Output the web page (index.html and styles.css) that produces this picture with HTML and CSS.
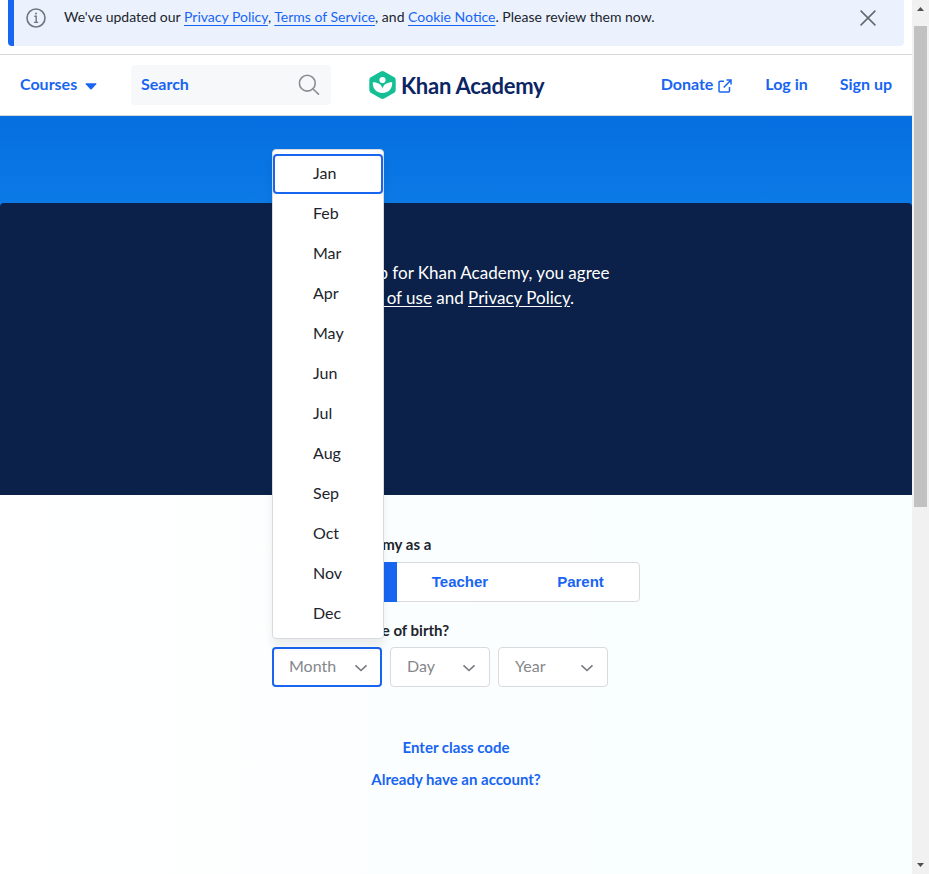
FILE: index.html
```html
<!DOCTYPE html>
<html lang="en">
<head>
<meta charset="utf-8">
<title>Khan Academy</title>
<link rel="stylesheet" href="styles.css">
</head>
<body>
<div class="window">
  <div class="page">
    <div class="notice">
      <svg class="info" width="20" height="20" viewBox="0 0 20 20" fill="none" stroke="#71747b" stroke-width="1.6"><circle cx="10" cy="10" r="9"/><path d="M8.3 8.3h1.9v6M8 14.4h4.2" stroke-width="1.4"/><circle cx="10" cy="5.6" r="1" fill="#71747b" stroke="none"/></svg>
      <p class="notice-text">We've updated our <a>Privacy Policy</a>, <a>Terms of Service</a>, and <a>Cookie Notice</a>. Please review them now.</p>
      <svg class="close" width="16" height="16" viewBox="0 0 16 16" stroke="#64676e" stroke-width="1.5"><path d="M.6.6l14.8 14.8M15.4.6L.6 15.4"/></svg>
    </div>
    <header class="nav">
      <a class="courses">Courses <svg width="12" height="7" viewBox="0 0 12 7"><path d="M1 .3h10q.9.1.2.9L6.700 6.300q-.7.6-1.400 0L.8 1.200Q.1.4 1 .3z" fill="#1865f2"/></svg></a>
      <div class="search"><span>Search</span><svg width="22" height="22" viewBox="0 0 22 22" fill="none" stroke="#8b8d92" stroke-width="1.6"><circle cx="9.3" cy="9.2" r="7.9"/><path d="M15 15l5.500 5.200" stroke-linecap="round"/></svg></div>
      <a class="logo">
        <svg width="27" height="28" viewBox="0 0 27 28"><path d="M11.800.5q1.700-.9 3.400 0l10 5.700q1.500.9 1.500 2.700v10.200q0 1.800-1.500 2.700l-10 5.700q-1.700.9-3.400 0l-10-5.700Q.3 20.900.3 19.100V8.900Q.3 7.100 1.800 6.200z" fill="#14bf96"/><circle cx="13.500" cy="9" r="3.100" fill="#fff"/><path d="M3.800 11.300C9 11.300 12.700 13.600 13.500 17.700C14.300 13.600 18 11.300 23.200 11.300C23.600 17.300 20 22 13.500 22S3.400 17.300 3.800 11.300z" fill="#fff"/></svg>
        <span>Khan Academy</span>
      </a>
      <nav class="links"><a class="donate">Donate <svg width="14" height="14" viewBox="0 0 14 14" fill="none" stroke="#1865f2" stroke-width="1.5"><path d="M6 2.200H2Q1 2.200 1 3.200V12Q1 13 2 13h8.500q1 0 1-1V8M8.500.9H13v4.500M13 .9L5.700 8.500"/></svg></a><a>Log in</a><a>Sign up</a></nav>
    </header>
    <div class="hero"></div>
    <section class="terms">
      <p>By signing up for Khan Academy, you agree to our <a>Terms of use</a> and <a>Privacy Policy</a>.</p>
    </section>
    <main class="signup">
      <div class="form">
        <div class="label">Join Khan Academy as a</div>
        <div class="roles"><button class="selected">Learner</button><button>Teacher</button><button>Parent</button></div>
        <div class="label birth">What is your date of birth?</div>
        <div class="dates">
          <div class="select month"><span>Month</span><svg width="14" height="8" viewBox="0 0 14 8"><path d="M1.500 1.300L7 6.500l5.500-5.200"/></svg>
            <ul class="menu"><li class="active">Jan</li><li>Feb</li><li>Mar</li><li>Apr</li><li>May</li><li>Jun</li><li>Jul</li><li>Aug</li><li>Sep</li><li>Oct</li><li>Nov</li><li>Dec</li></ul>
          </div>
          <div class="select day"><span>Day</span><svg width="14" height="8" viewBox="0 0 14 8"><path d="M1.500 1.300L7 6.500l5.500-5.200"/></svg></div>
          <div class="select year"><span>Year</span><svg width="14" height="8" viewBox="0 0 14 8"><path d="M1.500 1.300L7 6.500l5.500-5.200"/></svg></div>
        </div>
      </div>
      <a class="action">Enter class code</a>
      <a class="action">Already have an account?</a>
    </main>
  </div>
  <div class="scrollbar">
    <svg width="7" height="4" viewBox="0 0 7 4"><path d="M0 4L3.500 0L7 4z" fill="#505050"/></svg>
    <div class="thumb"></div>
    <svg class="down" width="7" height="4" viewBox="0 0 7 4"><path d="M0 0h7L3.500 4z" fill="#505050"/></svg>
  </div>
</div>
</body>
</html>
```
FILE: styles.css
```css
* { box-sizing: border-box; }
body { margin: 0; font-family: Lato, "Liberation Sans", sans-serif; font-size: 16px; color: #21242c; overflow: hidden; }
p, ul { margin: 0; padding: 0; }
.window { display: flex; width: 929px; height: 874px; }
.page { width: 912px; display: flex; flex-direction: column; background: #fff; }
.notice { height: 46px; margin: 0 8px 8px; border-left: 6px solid #1865f2; border-radius: 0 0 4px 4px; background: #ebf2fe; display: flex; align-items: flex-start; padding: 8px 28px 0 12px; }
.notice-text { margin: -1px 0 0 18px; font-size: 14px; line-height: 20px; flex: 1; white-space: nowrap; }
.notice-text a { color: #1865f2; text-decoration: underline; text-underline-offset: 3px; }
.close { margin-top: 2px; }
.nav { height: 62px; flex: none; border-top: 1px solid #d6d8da; border-bottom: 1px solid #d6d8da; display: flex; align-items: center; padding: 0 20px; color: #1865f2; font-weight: 700; }
.courses { width: 111px; padding-bottom: 3px; }
.courses svg { margin-left: 4px; vertical-align: 1px; }
.courses svg { vertical-align: 0; }
.search { width: 200px; height: 40px; border-radius: 4px; background: #f7f8fa; display: flex; justify-content: space-between; align-items: center; padding: 0 11px 0 10px; }
.search span { padding-bottom: 3px; }
.logo { margin-left: 38px; display: flex; align-items: center; gap: 5px; color: #0b2564; font-size: 22px; letter-spacing: -.25px; }
.links { margin-left: auto; display: flex; gap: 32px; padding-bottom: 3px; }
.donate { margin-right: 1px; }
.links svg { vertical-align: -3px; margin-left: 1px; }
.hero { height: 91px; flex: none; margin-bottom: -4px; background: linear-gradient(#056ee0, #0c7ae7); }
.terms { height: 292px; flex: none; border-radius: 4px 4px 0 0; background: #0b2149; color: #fff; font-size: 17px; line-height: 25px; padding: 57px 289px 0; }
.terms a { text-decoration: underline; text-underline-offset: 2px; }
.signup { flex: 1; background: linear-gradient(90deg, #fff 0, #f9feff 70%); display: flex; flex-direction: column; align-items: center; padding-top: 39px; }
.form { width: 368px; margin-bottom: 49px; }
.label { font-size: 15px; font-weight: 700; line-height: 20px; }
.roles { height: 40px; margin-top: 8px; display: grid; grid-template-columns: 125px 126px 115px; border: 1px solid #d9dadd; border-radius: 4px; background: #fff; }
.roles button { border: 0; background: none; padding: 0 2px 2px 0; color: #1865f2; font: bold 15px "Liberation Sans", sans-serif; }
.roles .selected { margin: -1px 1px -1px -1px; border-radius: 4px 0 0 4px; background: #1865f2; color: #fff; }
.birth { margin-top: 18px; }
.dates { display: flex; gap: 8px; margin-top: 7px; }
.select { position: relative; height: 40px; border: 1px solid #d9dadd; border-radius: 4px; background: #fff; color: #85878c; display: flex; align-items: center; justify-content: space-between; padding: 0 13px 4px 16px; }
.select svg { fill: none; stroke: #77797f; stroke-width: 1.6; margin-top: 5px; }
.month { width: 110px; border: 2px solid #1865f2; padding: 0 12px 4px 15px; }
.day { width: 100px; }
.year { width: 110px; }
.menu { position: absolute; left: -2px; bottom: 46px; width: 112px; height: 490px; padding: 4px 0; border: 1px solid #d9dadd; border-radius: 4px; background: #fff; box-shadow: 0 8px 8px rgba(33,36,44,.08); list-style: none; color: #21242c; }
.menu li { height: 40px; line-height: 38px; padding-left: 40px; }
.menu .active { border: 2px solid #1865f2; border-radius: 4px; line-height: 34px; padding-left: 38px; }
.action { color: #1865f2; font-size: 15px; font-weight: 700; line-height: 22px; margin-bottom: 10px; }
.scrollbar { width: 17px; background: #f1f1f1; display: flex; flex-direction: column; align-items: center; padding-top: 7px; }
.thumb { width: 13px; height: 481px; margin-top: 15px; background: #c1c1c1; }
.down { margin-top: auto; margin-bottom: 7px; }
```
